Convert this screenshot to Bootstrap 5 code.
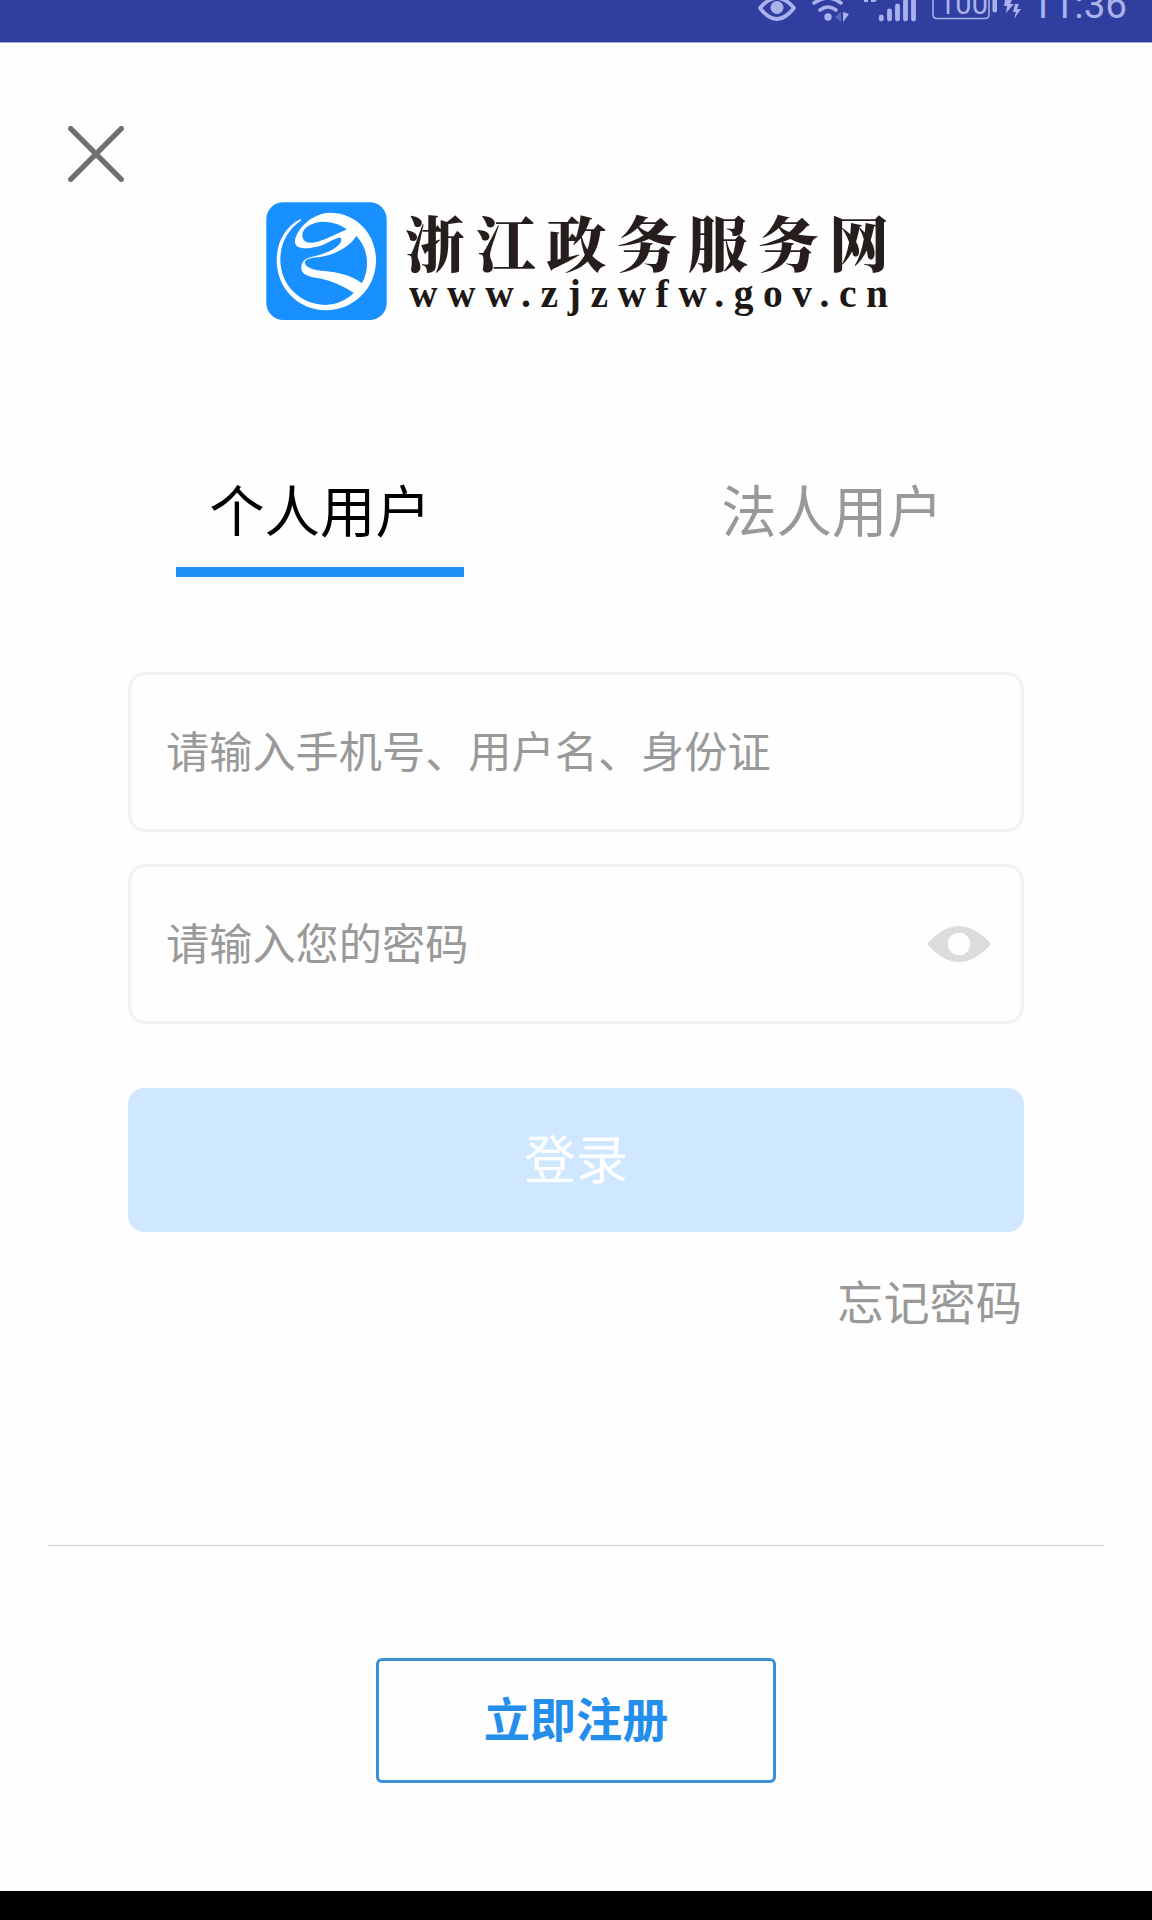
<!DOCTYPE html>
<html lang="zh-CN">
<head>
<meta charset="utf-8">
<meta name="viewport" content="width=device-width, initial-scale=1">
<title>浙江政务服务网</title>
<link href="https://cdn.jsdelivr.net/npm/bootstrap@5.3.0/dist/css/bootstrap.min.css" rel="stylesheet">
<style>
  body { font-family: "Noto Sans CJK SC", sans-serif; background: #fefefe; color: #000; overflow: hidden; }
  .screen { height: 1920px; }
  .status-bar { height: 43px; background: #303f9f; border-bottom: 1px solid #a3abd8; }
  .close-row { height: 159px; padding: 83px 0 0 68px; }
  .close-btn { width: 56px; height: 56px; }
  .brand { height: 118px; padding-left: 266px; }
  .user-tabs { margin-top: 143px; padding: 0 64px; }
  .user-tabs .nav-link { width: 288px; height: 114px; padding: 0 0 14px; font-size: 55.4px; line-height: 80px; color: #999; border: 0; border-bottom: 10px solid transparent; border-radius: 0; background: none; }
  .user-tabs .nav-link.active { color: #000; border-bottom-color: #1e90f8; background: none; }
  .login-form { margin: 95px 128px 0; }
  .field { height: 160px; padding: 0 30px 6px 35px; border: 3px solid #f1f1f1; border-radius: 18px; background: #fefefe; }
  .field .form-control { font-size: 43.2px; line-height: 64px; height: 64px; color: #333; }
  .field .form-control::placeholder { color: #999; opacity: 1; }
  .field-password { margin-top: 32px; }
  .eye { margin-top: 6px; }
  .login-btn, .login-btn:disabled { height: 144px; margin-top: 64px; padding: 0 0 7px; font-size: 52px; line-height: 1; color: #fff; background: #d0e8ff; border: 0; border-radius: 16px; opacity: 1; }
  .forgot { margin: 34px 2px 0 0; font-size: 46.2px; line-height: 68px; height: 68px; color: #999; }
  .divider { height: 1px; margin: 211px 48px 0; border: 0; background: #ccc; opacity: 1; }
  .register-btn { width: 400px; height: 125px; margin-top: 112px; padding: 0 0 7px; font-size: 46.2px; line-height: 1; font-weight: 700; color: #238eec; border: 3px solid #3a8fd5; border-radius: 6px; }
  .nav-strip { height: 29px; }
</style>
</head>
<body>
<div class="screen d-flex flex-column">
  <header class="status-bar d-flex justify-content-end flex-shrink-0">
    <svg width="412" height="42" viewBox="0 0 412 42" fill="#a9b2ec" stroke="none">
      <path d="M20 8Q37-12 54 8Q37 30 20 8Z" fill="none" stroke="#a9b2ec" stroke-width="3.8" stroke-linejoin="round"/>
      <circle cx="37" cy="7.500" r="6.500"/>
      <g fill="none" stroke="#a9b2ec" stroke-width="3.600" stroke-linecap="round">
        <path d="M74 3Q88-7 101 3M80 10Q88 4 96 10"/>
      </g>
      <circle cx="88" cy="17" r="3.700"/>
      <path d="M101 12v10l-6-5z" opacity=".35"/><path d="M103 12v10l6-8z"/>
      <path d="M124 0h4v2h-4zM131 0h6l-2 2h-4z"/>
      <g stroke="#a9b2ec" stroke-width="4.800" stroke-linecap="round">
        <path d="M141.300 17v2M149.500 11v8M157.500 6v13M165.500 1v18M173.500-4v23"/>
      </g>
      <path d="M193-4V14.500Q193 18.500 197 18.500H245Q249 18.500 249 14.500V-4" fill="none" stroke="#a9b2ec" stroke-width="1.500"/>
      <text x="199" y="14" font-family="Roboto, sans-serif" font-size="29" textLength="49">100</text>
      <path d="M252.500 0h4.500v11q-2 3-4.500 0z"/>
      <path d="M265 0h7l-2 4h4l-8 9 1-7h-3zM275 4l-2 8h3l-2 7 7-10h-4l2-5z"/>
      <text x="291" y="18" font-family="Roboto, sans-serif" font-size="38.600" textLength="96">11:36</text>
    </svg>
  </header>

  <div class="close-row flex-shrink-0">
    <button class="close-btn btn p-0 border-0 d-block" type="button" aria-label="关闭">
      <svg class="d-block" width="56" height="56" viewBox="0 0 56 56" stroke="#707070" stroke-width="5.400" stroke-linecap="round"><path d="M2.700 2.700 53.300 53.300M53.300 2.700 2.700 53.300"/></svg>
    </button>
  </div>

  <div class="brand flex-shrink-0">
    <svg class="d-block overflow-visible" width="624" height="118" viewBox="0 0 624 118">
      <rect x=".3" y=".3" width="120.400" height="117.700" rx="17" fill="#1890ff"/>
      <path transform="translate(0 .3) scale(.33333)" fill="#fff" d="M104 50C58 72 32 120 32 174C32 259 98 324 180 324C263 324 330 258 330 174C330 91 268 31 192 31C139 31 87 83 87 119C87 149 155 138 181 123C205 110 227 98 226 113C224 134 183 154 139 163C113 168 106 181 106 196C106 218 128 222 159 228C201 237 234 252 263 272C239 295 213 306 178 308C101 306 44 248 43 174C42 126 64 83 106 54ZM243 82C223 86 171 119 138 121C119 122 109 114 109 98C109 76 138 59 171 58C204 60 225 67 243 82ZM271 101C290 121 303 148 303 181C303 204 298 226 287 243C263 222 222 210 177 206C145 205 117 195 117 181C117 168 139 166 163 164C207 157 251 133 271 101Z"/>
      <text x="139" y="64.500" font-family="'Noto Serif CJK SC','Noto Sans CJK SC',serif" font-weight="900" font-size="60" textLength="484" fill="#251e1c">浙江政务服务网</text>
      <text x="143" y="104.500" font-family="'Liberation Serif', serif" font-weight="700" font-size="39.500" textLength="479" fill="#1d1715">www.zjzwfw.gov.cn</text>
    </svg>
  </div>

  <ul class="user-tabs nav nav-pills flex-shrink-0">
    <li class="nav-item col-6 d-flex justify-content-center"><button class="nav-link active" type="button">个人用户</button></li>
    <li class="nav-item col-6 d-flex justify-content-center"><button class="nav-link" type="button">法人用户</button></li>
  </ul>

  <form class="login-form d-flex flex-column flex-shrink-0">
    <div class="field d-flex align-items-center">
      <input class="form-control border-0 shadow-none bg-transparent p-0" type="text" placeholder="请输入手机号、用户名、身份证">
    </div>
    <div class="field field-password d-flex align-items-center">
      <input class="form-control border-0 shadow-none bg-transparent p-0" type="password" placeholder="请输入您的密码">
      <svg class="eye flex-shrink-0" width="64" height="36" viewBox="0 0 64 36"><path fill="#dcdcdc" fill-rule="evenodd" d="M0 18Q32-18 64 18Q32 54 0 18ZM32 6.800a11.200 11.200 0 1 0 0 22.400a11.200 11.200 0 1 0 0-22.400Z"/></svg>
    </div>
    <button class="login-btn btn w-100" type="button" disabled>登录</button>
    <a class="forgot align-self-end text-decoration-none" href="#">忘记密码</a>
  </form>

  <hr class="divider mb-0 flex-shrink-0">
  <button class="register-btn btn align-self-center flex-shrink-0" type="button">立即注册</button>
  <footer class="nav-strip bg-black mt-auto flex-shrink-0"></footer>
</div>
<script src="https://cdn.jsdelivr.net/npm/bootstrap@5.3.0/dist/js/bootstrap.bundle.min.js"></script>
</body>
</html>
